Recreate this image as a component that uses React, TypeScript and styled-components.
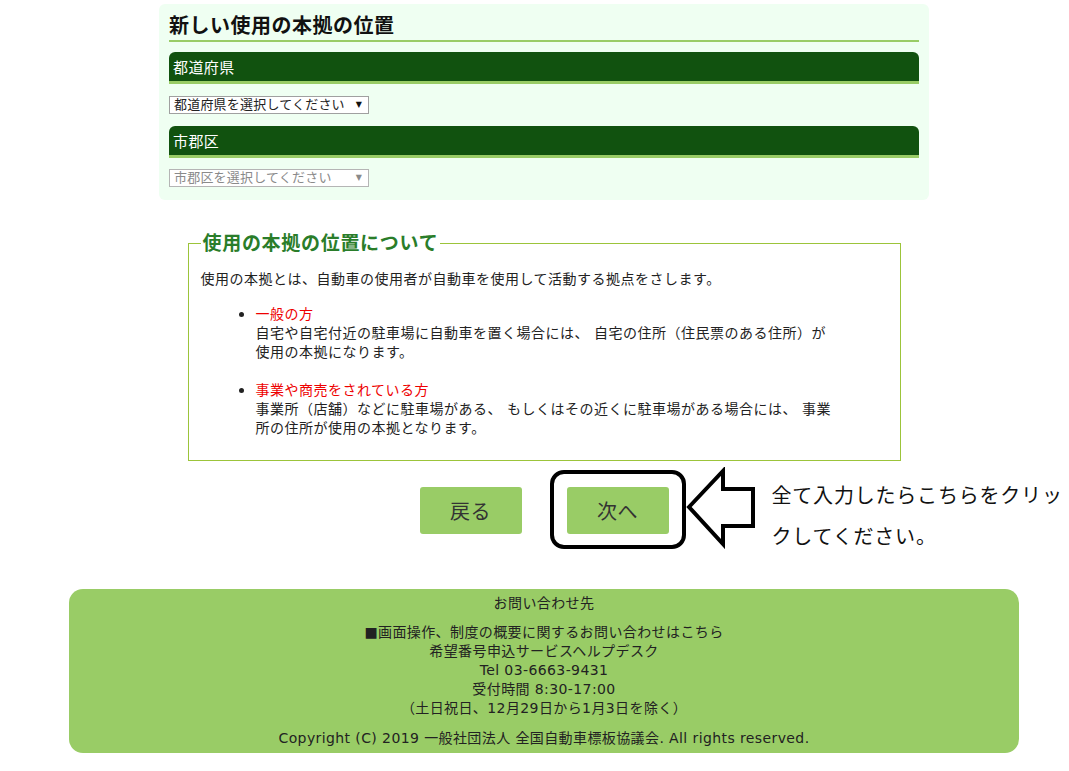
import React from "react";
import styled, { createGlobalStyle } from "styled-components";

const GlobalStyle = createGlobalStyle`
  html, body {
    margin: 0;
    padding: 0;
    overflow: hidden;
    background: #fff;
  }
  body {
    font-family: "DejaVu Sans", "Noto Sans CJK JP", sans-serif;
    color: #222;
  }
`;

const Page = styled.div`
  width: 1088px;
  padding-top: 4px;
  padding-bottom: 20px;
`;

const Panel = styled.section`
  width: 770px;
  box-sizing: border-box;
  margin: 0 auto;
  padding: 8px 10px 13px;
  background: #effff2;
  border-radius: 6px;
`;

const Title = styled.h2`
  margin: 0;
  font-size: 20px;
  line-height: 28px;
  font-weight: bold;
  letter-spacing: 0.5px;
  color: #111;
  border-bottom: 2px solid #99cc66;
`;

const SectionBar = styled.div<{ $first?: boolean }>`
  margin-top: ${({ $first }) => ($first ? "10px" : "12px")};
  height: 29px;
  display: flex;
  align-items: center;
  padding-left: 4px;
  background: #11520f;
  border-bottom: 3px solid #99cc66;
  border-radius: 6px 6px 0 0;
  color: #fff;
  font-size: 15px;
  letter-spacing: 0.4px;
`;

const SelectBox = styled.div<{ $disabled?: boolean }>`
  margin-top: ${({ $disabled }) => ($disabled ? "11px" : "12px")};
  width: 200px;
  height: 18px;
  box-sizing: border-box;
  display: flex;
  align-items: center;
  justify-content: space-between;
  padding: 0 6px 0 4px;
  background: #fff;
  border: 1px solid ${({ $disabled }) => ($disabled ? "#b5b5b5" : "#a0a0a0")};
  color: ${({ $disabled }) => ($disabled ? "#8a8a8a" : "#222")};
  font-size: 13px;
  line-height: 16px;
  letter-spacing: 0.2px;
  white-space: nowrap;
`;

const Caret = styled.span<{ $disabled?: boolean }>`
  font-size: 8px;
  color: ${({ $disabled }) => ($disabled ? "#8a8a8a" : "#111")};
`;

const InfoBox = styled.fieldset`
  width: 713px;
  box-sizing: border-box;
  margin: 31px auto 0;
  padding: 0 12px 22px;
  border: 1px solid #9cc43a;
  font-size: 14px;
  line-height: 19px;
  letter-spacing: 0.5px;
`;

const Legend = styled.legend`
  margin-left: 0;
  padding: 0 2px;
  font-size: 19px;
  line-height: 24px;
  font-weight: bold;
  letter-spacing: 0.7px;
  color: #2a7d2a;
`;

const Lead = styled.p`
  margin: 15px 0 0;
`;

const CaseList = styled.ul`
  margin: 15px 0 0;
  padding-left: 55px;
`;

const CaseItem = styled.li`
  &::marker {
    font-family: "Noto Sans CJK JP", sans-serif;
  }

  & + & {
    margin-top: 18px;
  }
`;

const CaseName = styled.span`
  color: #e00;
`;

const ButtonRow = styled.div`
  margin-top: 26px;
  display: flex;
  justify-content: center;
  gap: 45px;
`;

const NavButton = styled.button`
  width: 102px;
  height: 47px;
  border: none;
  border-radius: 3px;
  background: #99cc66;
  color: #333;
  font-family: inherit;
  font-size: 20px;
  letter-spacing: 0.5px;
  cursor: pointer;
`;

const Highlight = styled.div`
  position: relative;
`;

const HighlightFrame = styled.div`
  position: absolute;
  left: -17px;
  top: -17px;
  width: 136px;
  height: 79px;
  box-sizing: border-box;
  border: 4px solid #000;
  border-radius: 14px;
  pointer-events: none;
`;

const Callout = styled.div`
  position: absolute;
  left: calc(100% + 17px);
  top: -20px;
  display: flex;
  align-items: flex-start;
  gap: 16px;
`;

const Hint = styled.div`
  margin-top: 9px;
  font-size: 20px;
  line-height: 41px;
  letter-spacing: 0.8px;
  color: #111;
  white-space: nowrap;
`;

const Footer = styled.footer`
  width: 950px;
  box-sizing: border-box;
  margin: 55px auto 0;
  padding: 5px 0 5px;
  background: #99cc66;
  border-radius: 14px;
  text-align: center;
  font-size: 14px;
  line-height: 19px;
  letter-spacing: 0.4px;
  color: #222;
`;

const FooterBlock = styled.div<{ $gap?: number }>`
  margin-top: ${({ $gap }) => $gap ?? 0}px;
`;

function LeftArrow() {
  return (
    <svg width="70" height="82" viewBox="0 0 70 82">
      <polygon
        points="3,40 37,4 37,22 67,22 67,59 37,59 37,77"
        fill="#fff"
        stroke="#000"
        strokeWidth="4"
        strokeLinejoin="miter"
      />
    </svg>
  );
}

export default function App() {
  return (
    <>
      <GlobalStyle />
      <Page>
        <Panel>
          <Title>新しい使用の本拠の位置</Title>
          <SectionBar $first>都道府県</SectionBar>
          <SelectBox>
            <span>都道府県を選択してください</span>
            <Caret>▼</Caret>
          </SelectBox>
          <SectionBar>市郡区</SectionBar>
          <SelectBox $disabled>
            <span>市郡区を選択してください</span>
            <Caret $disabled>▼</Caret>
          </SelectBox>
        </Panel>

        <InfoBox>
          <Legend>使用の本拠の位置について</Legend>
          <Lead>
            使用の本拠とは、自動車の使用者が自動車を使用して活動する拠点をさします。
          </Lead>
          <CaseList>
            <CaseItem>
              <CaseName>一般の方</CaseName>
              <br />
              自宅や自宅付近の駐車場に自動車を置く場合には、 自宅の住所（住民票のある住所）が
              <br />
              使用の本拠になります。
            </CaseItem>
            <CaseItem>
              <CaseName>事業や商売をされている方</CaseName>
              <br />
              事業所（店舗）などに駐車場がある、 もしくはその近くに駐車場がある場合には、 事業
              <br />
              所の住所が使用の本拠となります。
            </CaseItem>
          </CaseList>
        </InfoBox>

        <ButtonRow>
          <NavButton>戻る</NavButton>
          <Highlight>
            <NavButton>次へ</NavButton>
            <HighlightFrame />
            <Callout>
              <LeftArrow />
              <Hint>
                全て入力したらこちらをクリッ
                <br />
                クしてください。
              </Hint>
            </Callout>
          </Highlight>
        </ButtonRow>

        <Footer>
          <div>お問い合わせ先</div>
          <FooterBlock $gap={10}>
            <div>■画面操作、制度の概要に関するお問い合わせはこちら</div>
            <div>希望番号申込サービスヘルプデスク</div>
            <div>Tel 03-6663-9431</div>
            <div>受付時間 8:30-17:00</div>
            <div>（土日祝日、12月29日から1月3日を除く）</div>
          </FooterBlock>
          <FooterBlock $gap={11}>
            Copyright (C) 2019 一般社団法人 全国自動車標板協議会. All rights reserved.
          </FooterBlock>
        </Footer>
      </Page>
    </>
  );
}
